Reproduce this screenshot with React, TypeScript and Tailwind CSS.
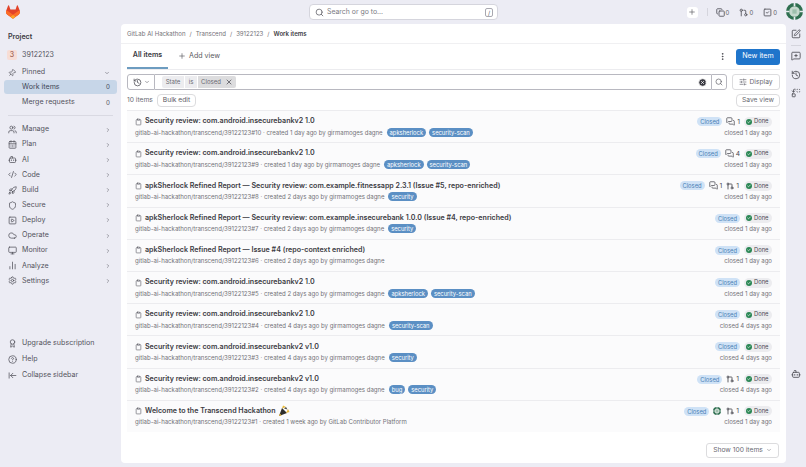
import {
  ArrowLeftToLine, Award, BarChart2, Bot, CalendarDays, Check, ChevronDown, ChevronRight, CircleHelp, Clipboard, Cloud, CodeXml,
  Copy, EllipsisVertical, GitPullRequest, History, MessageSquarePlus, Monitor, Pin, Plus, Rocket, Search, Settings,
  Shield, SlidersHorizontal, SquareCheck, SquarePen, SquarePlay, Users, X, CircleX, MessagesSquare, Replace,
} from 'lucide-react'

const navItems = [
  { label: 'Manage', icon: Users },
  { label: 'Plan', icon: CalendarDays },
  { label: 'AI', icon: Bot },
  { label: 'Code', icon: CodeXml },
  { label: 'Build', icon: Rocket },
  { label: 'Secure', icon: Shield },
  { label: 'Deploy', icon: SquarePlay },
  { label: 'Operate', icon: Cloud },
  { label: 'Monitor', icon: Monitor },
  { label: 'Analyze', icon: BarChart2 },
  { label: 'Settings', icon: Settings },
]

const v1 = 'Security review: com.android.insecurebankv2 1.0'
const v2 = 'Security review: com.android.insecurebankv2 v1.0'
const by = 'girmamoges dagne'

const items = [
  { title: v1, num: 10, created: '1 day', labels: ['apksherlock', 'security-scan'], comments: 1, closed: '1 day' },
  { title: v1, num: 9, created: '1 day', labels: ['apksherlock', 'security-scan'], comments: 4, closed: '1 day' },
  { title: 'apkSherlock Refined Report — Security review: com.example.fitnessapp 2.3.1 (Issue #5, repo-enriched)', num: 8, created: '2 days', labels: ['security'], comments: 1, mrs: 1, closed: '1 day' },
  { title: 'apkSherlock Refined Report — Security review: com.example.insecurebank 1.0.0 (Issue #4, repo-enriched)', num: 7, created: '2 days', labels: ['security'], closed: '1 day' },
  { title: 'apkSherlock Refined Report — Issue #4 (repo-context enriched)', num: 6, created: '2 days', labels: [], closed: '1 day' },
  { title: v1, num: 5, created: '2 days', labels: ['apksherlock', 'security-scan'], closed: '1 day' },
  { title: v1, num: 4, created: '4 days', labels: ['security-scan'], closed: '4 days' },
  { title: v2, num: 3, created: '4 days', labels: ['security'], closed: '4 days' },
  { title: v2, num: 2, created: '4 days', labels: ['bug', 'security'], mrs: 1, closed: '4 days' },
  { title: 'Welcome to the Transcend Hackathon', num: 1, created: '1 week', labels: [], mrs: 1, closed: '1 day', author: 'GitLab Contributor Platform', welcome: true },
]

function Tanuki() {
  return (
    <svg viewBox="0 0 25 24" className="w-[14px] h-[14px]">
      <path fill="#E24329" d="m24.507 9.5-.034-.09L21.082.562a.896.896 0 0 0-1.694.091l-2.29 7.01H7.825L5.535.653a.898.898 0 0 0-1.694-.09L.451 9.411.416 9.5a6.297 6.297 0 0 0 2.09 7.278l.012.01.03.022 5.16 3.867 2.56 1.935 1.554 1.176a1.051 1.051 0 0 0 1.268 0l1.555-1.176 2.56-1.935 5.197-3.89.014-.01A6.297 6.297 0 0 0 24.507 9.5Z" />
      <path fill="#FC6D26" d="m24.507 9.5-.034-.09a11.44 11.44 0 0 0-4.56 2.051l-7.447 5.632 4.742 3.584 5.197-3.89.014-.01A6.297 6.297 0 0 0 24.507 9.5Z" />
      <path fill="#FCA326" d="m7.707 20.677 2.56 1.935 1.555 1.176a1.051 1.051 0 0 0 1.268 0l1.555-1.176 2.56-1.935-4.743-3.584-4.755 3.584Z" />
      <path fill="#FC6D26" d="M5.01 11.461a11.43 11.43 0 0 0-4.56-2.05L.416 9.5a6.297 6.297 0 0 0 2.09 7.278l.012.01.03.022 5.16 3.867 4.745-3.584-7.444-5.632Z" />
    </svg>
  )
}

function Identicon({ size }: { size: string }) {
  return (
    <svg viewBox="0 0 16 16" className={size}>
      <circle cx="8" cy="8" r="8" fill="#2f6f50" />
      <path d="M8 0v3M8 13v3M0 8h3M13 8h3" stroke="#e8edf0" strokeWidth="1.6" />
      <circle cx="8" cy="8" r="5" fill="#c5d8cd" />
      <rect x="6" y="6" width="4" height="4" fill="#9dbfac" />
    </svg>
  )
}

function Party() {
  return (
    <svg viewBox="0 0 12 12" className="ml-[2px] w-[12px] h-[12px] shrink-0">
      <path d="M1 11 4 3l5 5z" fill="#2f2e2a" />
      <path d="M2 8.4 3.6 10.4 1 11z" fill="#e9b93a" />
      <path d="M4 3.5l1-3 3 1.5zM8 8l3.5-1-1.5-3z" fill="#e9b93a" />
      <path d="M6 3.5 8 2l1.5 2.5z" fill="#4b4a40" />
    </svg>
  )
}

function Sidebar() {
  return (
    <aside className="w-[121px] shrink-0 flex flex-col text-[7.1px] text-[#53535c]">
      <div className="h-[24px] flex items-center pl-[6px]"><Tanuki /></div>
      <div className="pl-[8px] h-[21px] flex items-end pb-[2px] font-semibold text-[#3a3a42]">Project</div>
      <div className="mt-[2px] h-[16px] flex items-center pl-[7px]">
        <span className="w-[10px] h-[10px] rounded-[2px] bg-[#f7ddd6] text-[#8f4a3a] flex items-center justify-center text-[7px]">3</span>
        <span className="ml-[5px]">39122123</span>
      </div>
      <div className="mt-[2px] h-[15px] flex items-center pl-[8px] pr-[11px]">
        <Pin className="w-[8px] h-[8px] rotate-45 shrink-0" />
        <span className="ml-[6px] flex-1">Pinned</span>
        <ChevronDown className="w-[6px] h-[6px]" />
      </div>
      <div className="mx-[4px] h-[14px] rounded-[3px] bg-[#c7d6e8] flex items-center pl-[18px] pr-[7px] text-[#3f4756]">
        <span className="flex-1">Work items</span><span className="text-[6.2px]">0</span>
      </div>
      <div className="mx-[4px] mt-[1px] h-[15px] flex items-center pl-[18px] pr-[7px]">
        <span className="flex-1">Merge requests</span><span className="text-[6.2px]">0</span>
      </div>
      <div className="mx-[8px] mt-[5px] mb-[6px] border-t border-[#d9d9e2]" />
      {navItems.map((n) => (
        <div key={n.label} className="h-[15.15px] flex items-center pl-[8px] pr-[10px]">
          <n.icon className="w-[9px] h-[9px] shrink-0" />
          <span className="ml-[5px] flex-1">{n.label}</span>
          <ChevronRight className="w-[6px] h-[6px]" />
        </div>
      ))}
      <div className="flex-1" />
      <div className="mb-[84px] flex flex-col">
        <div className="h-[16px] flex items-center pl-[8px]"><Award className="w-[9px] h-[9px]" /><span className="ml-[5px]">Upgrade subscription</span></div>
        <div className="h-[16px] flex items-center pl-[8px]"><CircleHelp className="w-[9px] h-[9px]" /><span className="ml-[5px]">Help</span></div>
        <div className="h-[16px] flex items-center pl-[8px]"><ArrowLeftToLine className="w-[9px] h-[9px]" /><span className="ml-[5px]">Collapse sidebar</span></div>
      </div>
    </aside>
  )
}

function TopBar() {
  return (
    <div className="h-[24px] flex items-center text-[#5a5a62]">
      <div className="ml-[188px] w-[189px] h-[16px] rounded-[4px] bg-white border border-[#d5d5dd] flex items-center pl-[5px] pr-[4px]">
        <Search className="w-[9px] h-[9px]" />
        <span className="ml-[3px] flex-1 text-[6.9px] text-[#7a7a82]">Search or go to...</span>
        <span className="w-[8px] h-[9px] rounded-[2px] border border-[#a8a8b0] flex items-center justify-center text-[6px]">/</span>
      </div>
      <div className="flex-1" />
      <div className="mr-[9px] w-[11px] h-[11px] rounded-[3px] bg-white flex items-center justify-center"><Plus className="w-[8px] h-[8px]" /></div>
      <div className="mr-[8px] h-[8px] border-l border-[#d5d5dd]" />
      <div className="flex items-center gap-[10px] text-[6px] mr-[29px]">
        <span className="flex items-center gap-[1px]"><Copy className="w-[9px] h-[9px]" strokeWidth={2.4} />0</span>
        <span className="flex items-center gap-[1px]"><GitPullRequest className="w-[9px] h-[9px]" strokeWidth={2.4} />0</span>
        <span className="flex items-center gap-[1px]"><SquareCheck className="w-[9px] h-[9px]" strokeWidth={2.4} />0</span>
      </div>
    </div>
  )
}

function Label({ text }: { text: string }) {
  return <span className="h-[9px] px-[3px] rounded-full bg-[#5b8fc4] text-white text-[5.8px] leading-[9px]">{text}</span>
}

function DonePill() {
  return (
    <span className="h-[10px] w-[28px] pl-[2px] rounded-full bg-[#ececef] flex items-center gap-[2px] text-[5.8px] text-[#4a4a52]">
      <span className="w-[6px] h-[6px] rounded-full bg-[#2a8754] flex items-center justify-center"><Check className="w-[4px] h-[4px] text-white" strokeWidth={4} /></span>
      Done
    </span>
  )
}

function Row({ item }: { item: (typeof items)[number] }) {
  return (
    <div className="h-[32.2px] border-t border-[#ececef] flex items-center pl-[8px] pr-[8px] bg-[#fbfbfc]">
      <div className="flex-1 min-w-0">
        <div className="flex items-center text-[7.1px] font-semibold text-[#3a3a42] h-[11px]">
          <Clipboard className="w-[7px] h-[8px] mr-[3px] shrink-0 text-[#55555d]" />
          <span className="whitespace-nowrap">{item.title}</span>
          {item.welcome && <Party />}
        </div>
        <div className="flex items-center gap-[3px] text-[6.05px] text-[#737278] h-[10px] whitespace-nowrap">
          <span className="mr-[1px]">gitlab-ai-hackathon/transcend/39122123#{item.num} · created {item.created} ago by {item.author ?? by}</span>
          {item.labels.map((l) => <Label key={l} text={l} />)}
        </div>
      </div>
      <div className="flex flex-col items-end">
        <div className="flex items-center text-[6.7px] text-[#4a4a52] h-[11px]">
          <span className="h-[9px] w-[25px] text-center rounded-full bg-[#cfe2f6] text-[#4a7fb5] text-[5.8px] leading-[9px] mr-[4px]">Closed</span>
          {item.welcome && <Identicon size="w-[8px] h-[8px] mr-[5px]" />}
          {item.comments !== undefined && (
            <span className="flex items-center gap-[2px] mr-[4px]"><MessagesSquare className="w-[9px] h-[9px]" />{item.comments}</span>
          )}
          {item.mrs !== undefined && (
            <span className="flex items-center gap-[2px] mr-[5px]"><GitPullRequest className="w-[8px] h-[8px]" strokeWidth={2.6} />{item.mrs}</span>
          )}
          <DonePill />
        </div>
        <span className="text-[6.05px] text-[#737278] h-[10px] flex items-center">closed {item.closed} ago</span>
      </div>
    </div>
  )
}

function Panel() {
  return (
    <main className="w-[665px] h-[439px] bg-white rounded-[4px] flex flex-col">
      <div className="h-[20px] shrink-0 border-b border-[#f0f0f2] pl-[6px] flex items-center gap-[4px] text-[6.05px] text-[#737278]">
        <span>GitLab AI Hackathon</span><span>/</span><span>Transcend</span><span>/</span><span>39122123</span><span>/</span>
        <span className="font-semibold text-[#3a3a42]">Work items</span>
      </div>
      <div className="h-[26px] shrink-0 mx-[6px] border-b border-[#ececef] flex items-center">
        <span className="w-[41px] h-full flex items-center justify-center font-semibold text-[7.1px] text-[#3a3a42] border-b-2 border-[#6d9cc0]">All items</span>
        <span className="ml-[10px] flex items-center gap-[3px] text-[7.1px] text-[#5a5a62]"><Plus className="w-[8px] h-[8px]" />Add view</span>
        <div className="flex-1" />
        <EllipsisVertical className="w-[9px] h-[9px] text-[#3a3a42]" />
        <span className="ml-[9px] w-[44px] h-[16px] rounded-[3px] bg-[#1f75cb] text-white text-[7.1px] flex items-center justify-center">New item</span>
      </div>
      <div className="mt-[4px] mx-[6px] h-[16px] shrink-0 flex items-center">
        <div className="w-[28px] h-full rounded-l-[3px] border border-[#b8b8c0] flex items-center justify-center gap-[2px] text-[#4a4a52]">
          <History className="w-[9px] h-[9px]" /><ChevronDown className="w-[6px] h-[6px]" />
        </div>
        <div className="flex-1 h-full border-y border-[#b8b8c0] flex items-center pl-[7px] pr-[4px] text-[6.05px] text-[#6a6a72]">
          <span className="h-[12px] w-[22px] justify-center bg-[#ececef] rounded-l-[2px] flex items-center">State</span>
          <span className="ml-[1px] h-[12px] w-[12px] justify-center bg-[#ececef] flex items-center">is</span>
          <span className="ml-[1px] h-[12px] w-[38px] justify-center bg-[#dcdcde] rounded-r-[2px] flex items-center gap-[4px]">Closed<X className="w-[8px] h-[8px] text-[#3a3a42]" /></span>
          <div className="flex-1" />
          <CircleX className="w-[9px] h-[9px] fill-[#3a3a42] text-white" />
        </div>
        <div className="w-[16px] h-full rounded-r-[3px] border border-[#b8b8c0] flex items-center justify-center text-[#5a5a62]"><Search className="w-[8px] h-[8px]" /></div>
        <span className="ml-[5px] w-[48px] h-full rounded-[3px] border border-[#dcdcde] flex items-center justify-center gap-[2px] text-[6.7px] text-[#6a6a72]">
          <SlidersHorizontal className="w-[8px] h-[8px]" />Display
        </span>
      </div>
      <div className="mt-[4px] mx-[6px] h-[13px] shrink-0 flex items-center text-[6.7px] text-[#6a6a72]">
        <span>10 items</span>
        <span className="ml-[4px] h-full px-[5px] rounded-[4px] border border-[#dcdcde] flex items-center text-[#5a5a62]">Bulk edit</span>
        <div className="flex-1" />
        <span className="h-full px-[5px] rounded-[4px] border border-[#dcdcde] flex items-center">Save view</span>
      </div>
      <div className="mt-[3px] mx-[6px] shrink-0">
        {items.map((item) => <Row key={item.num} item={item} />)}
      </div>
      <div className="mt-[11px] mx-[7px] flex justify-end">
        <span className="w-[73px] h-[15px] rounded-[3px] border border-[#dcdcde] flex items-center justify-center gap-[3px] text-[6.7px] text-[#6a6a72]">
          Show 100 items<ChevronDown className="w-[6px] h-[6px]" />
        </span>
      </div>
    </main>
  )
}

function RightRail() {
  return (
    <div className="w-[20px] shrink-0 flex flex-col items-center text-[#4a4a52]">
      <SquarePen className="mt-[5px] w-[10px] h-[10px]" />
      <div className="mt-[6px] w-[10px] border-t border-[#d5d5dd]" />
      <MessageSquarePlus className="mt-[5px] w-[10px] h-[10px]" />
      <History className="mt-[9px] w-[10px] h-[10px]" />
      <Replace className="mt-[8px] w-[10px] h-[10px]" />
      <Bot className="mt-[271px] w-[10px] h-[10px]" />
    </div>
  )
}

export default function App() {
  return (
    <div className="relative w-[806px] h-[467px] overflow-hidden bg-[#ececf4] flex font-['Inter',sans-serif]">
      <Sidebar />
      <div className="flex-1 flex flex-col">
        <TopBar />
        <div className="flex">
          <Panel />
          <RightRail />
        </div>
      </div>
      <div className="absolute top-[3px] left-[786px]"><Identicon size="w-[17px] h-[17px]" /></div>
    </div>
  )
}
